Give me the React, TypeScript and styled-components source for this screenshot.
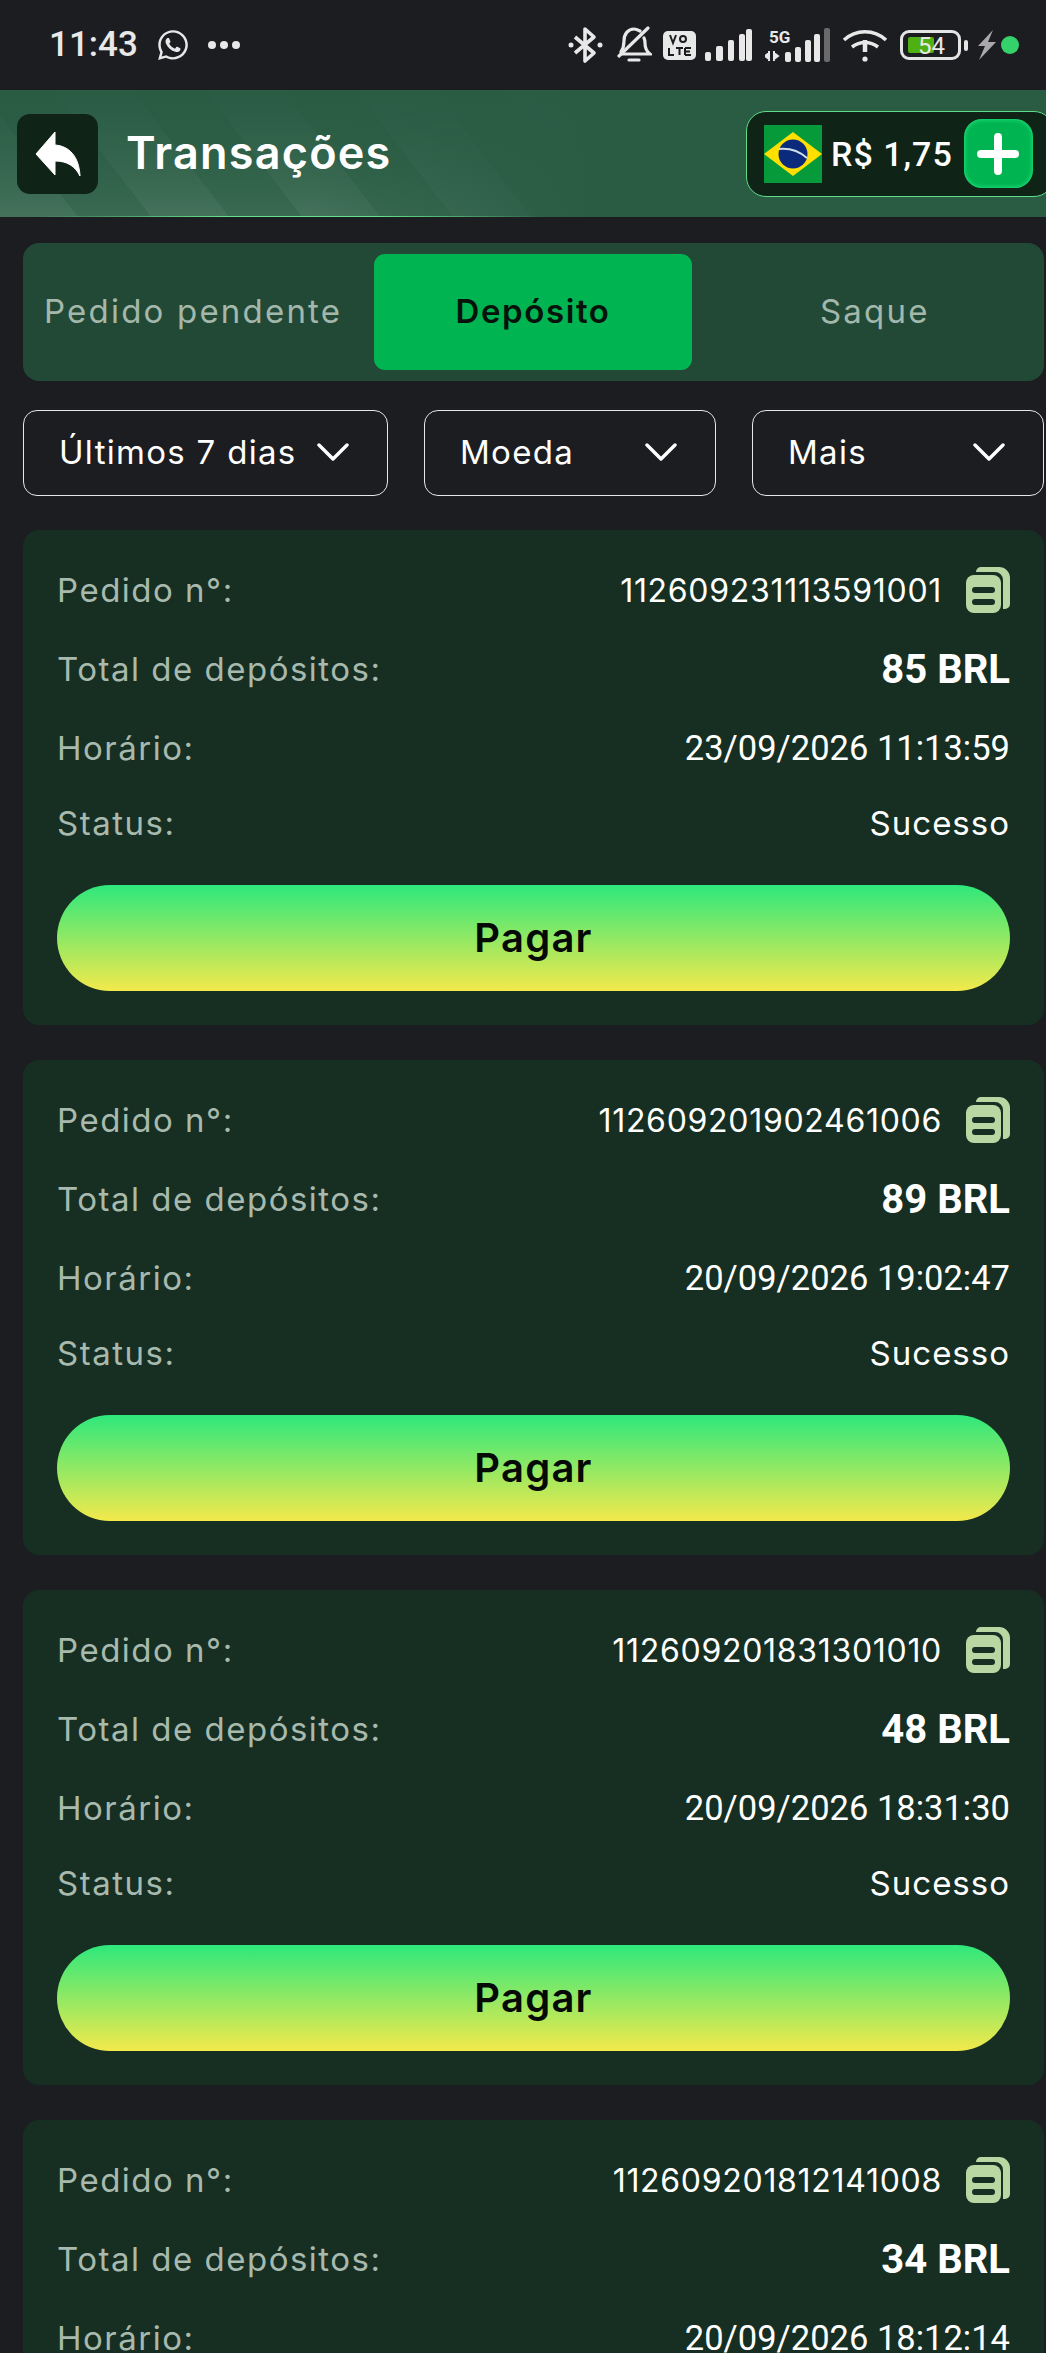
import { FC } from "react"
import styled, { createGlobalStyle } from "styled-components"
import { FaWhatsapp } from "react-icons/fa"

const GlobalStyle = createGlobalStyle`
  html, body {
    margin: 0;
    height: 100%;
    overflow: hidden;
    background: #1c1d21;
  }
`

const Page = styled.div`
  width: 1046px;
  height: 2353px;
  overflow: hidden;
  background: #1c1d21;
  color: #fff;
  font-family: Inter, "Noto Sans", sans-serif;
`

const StatusBar = styled.div`
  height: 90px;
  display: flex;
  align-items: center;
  padding-left: 49px;
  color: #e8e8e8;
`

const Clock = styled.span`
  font-family: Roboto, sans-serif;
  font-weight: 500;
  font-size: 35px;
  line-height: 90px;
`

const Whatsapp = styled(FaWhatsapp)`
  width: 34px;
  height: 34px;
  margin-left: 18px;
`

const Dots = styled.div`
  display: flex;
  gap: 4px;
  margin-left: 18px;
`

const Dot = styled.i`
  width: 8px;
  height: 8px;
  border-radius: 50%;
  background: #e8e8e8;
`

const StatusIcons = styled.div`
  margin-left: auto;
  display: flex;
  align-items: center;
  padding-right: 27px;
`

const StatusIcon = styled.svg<{ $gap?: number }>`
  display: block;
  flex: none;
  margin-left: ${(p) => p.$gap ?? 0}px;
`

const Battery = styled.div`
  width: 61px;
  height: 30px;
  box-sizing: border-box;
  margin-left: 12px;
  border: 3px solid #e4e4e4;
  border-radius: 9px;
  padding: 4px 5px;
  position: relative;
`

const BatteryFill = styled.div`
  width: 26px;
  height: 100%;
  background: #4fb013;
  border-radius: 2px;
`

const BatteryLabel = styled.span`
  position: absolute;
  left: 15px;
  top: -1px;
  font-family: Roboto, sans-serif;
  font-size: 24px;
  line-height: 28px;
  color: #e8e8e8;
`

const BatteryCap = styled.i`
  width: 4px;
  height: 11px;
  margin-left: 3px;
  background: #e4e4e4;
  border-radius: 2px;
`

const ChargeDot = styled.i`
  width: 18px;
  height: 18px;
  margin-left: 5px;
  border-radius: 50%;
  background: #34d26a;
`

const Header = styled.header`
  height: 127px;
  box-sizing: border-box;
  display: flex;
  align-items: center;
  padding-left: 17px;
  background:
    linear-gradient(90deg, transparent 3%, #62e58a 22%, #62e58a 36%, transparent 52%) bottom / 100% 1px no-repeat,
    linear-gradient(90deg, rgba(42, 92, 68, 0) 0%, rgba(42, 92, 68, 0) 30%, #2a5c44 56%),
    linear-gradient(180deg, #2a5c44 0%, rgba(42, 92, 68, 0) 100%),
    repeating-linear-gradient(52.6deg, rgba(255, 255, 255, 0.05) 0 62px, rgba(255, 255, 255, 0) 62px 120px),
    linear-gradient(0deg, #3a6a51 0%, #2a5c44 100%);
`

const BackButton = styled.button`
  width: 81px;
  height: 80px;
  flex: none;
  padding: 0;
  border: 0;
  border-radius: 13px;
  background: #0f2317;
  display: flex;
  align-items: center;
  justify-content: center;
`

const Title = styled.h1`
  margin: 0 0 3px 28px;
  font-weight: 600;
  font-size: 45px;
  letter-spacing: 1.2px;
  color: #fff;
`

const Balance = styled.div`
  margin-left: auto;
  margin-right: -8px;
  width: 308px;
  height: 86px;
  box-sizing: border-box;
  display: flex;
  align-items: center;
  padding-left: 17px;
  border: 1px solid #5fdc87;
  border-radius: 20px;
  background: #0f2317;
`

const Flag = styled.svg`
  display: block;
  flex: none;
`

const BalanceValue = styled.span`
  margin-left: 9px;
  font-family: Roboto, sans-serif;
  font-weight: 500;
  font-size: 34px;
  letter-spacing: 1px;
  white-space: nowrap;
`

const AddButton = styled.button`
  width: 69px;
  height: 69px;
  flex: none;
  margin-left: 11px;
  padding: 0;
  border: 0;
  border-radius: 18px;
  background: #00b451;
  box-shadow: inset 0 0 5px #2af08a;
  display: flex;
  align-items: center;
  justify-content: center;
`

const Content = styled.main`
  padding: 26px 2px 0 23px;
`

const Tabs = styled.div`
  height: 138px;
  box-sizing: border-box;
  display: grid;
  grid-template-columns: 351px 318px 1fr;
  padding: 11px 0;
  border-radius: 16px;
  background: #224936;
`

const Tab = styled.div<{ $active?: boolean; $inset?: number }>`
  display: flex;
  align-items: center;
  justify-content: ${(p) => (p.$inset === undefined ? "center" : "flex-start")};
  padding: 0 0 2px ${(p) => p.$inset ?? 0}px;
  border-radius: 11px;
  font-size: 33px;
  font-weight: ${(p) => (p.$active ? 600 : 400)};
  color: ${(p) => (p.$active ? "#06130b" : "#a3b8ab")};
  background: ${(p) => (p.$active ? "#00b451" : "transparent")};
  letter-spacing: ${(p) => (p.$active ? 1.6 : 2.2)}px;
  white-space: nowrap;
`

const Filters = styled.div`
  display: grid;
  grid-template-columns: 365px 292px 292px;
  gap: 36px;
  margin-top: 29px;
`

const Filter = styled.div`
  height: 86px;
  box-sizing: border-box;
  display: flex;
  align-items: center;
  justify-content: space-between;
  padding: 0 38px 2px 35px;
  border: 1px solid #e6e6e6;
  border-radius: 14px;
  font-size: 33px;
  letter-spacing: 1.3px;
  white-space: nowrap;
`

const Chevron = styled.svg`
  display: block;
  flex: none;
`

const OrderList = styled.div`
  display: flex;
  flex-direction: column;
  gap: 35px;
  margin-top: 34px;
`

const OrderCard = styled.section`
  height: 495px;
  box-sizing: border-box;
  flex: none;
  padding: 37px 34px 35px;
  border-radius: 16px;
  background: #162f22;
  display: flex;
  flex-direction: column;
  gap: 33px;
`

const Row = styled.div<{ $short?: boolean }>`
  height: ${(p) => (p.$short ? 38 : 46)}px;
  flex: none;
  display: flex;
  align-items: center;
  justify-content: space-between;
`

const Label = styled.span`
  font-size: 33px;
  letter-spacing: 1.5px;
  color: #a8b9ae;
  white-space: nowrap;
`

const OrderNumber = styled.div`
  display: flex;
  align-items: center;
  gap: 24px;
  font-size: 32px;
  letter-spacing: 0.7px;
  color: #fff;
`

const Amount = styled.span`
  font-family: Roboto, sans-serif;
  font-weight: 700;
  font-size: 40px;
  color: #fff;
`

const DateText = styled.span`
  font-family: Roboto, sans-serif;
  font-size: 34.5px;
  color: #fff;
`

const StatusText = styled.span`
  font-size: 33px;
  letter-spacing: 1px;
  color: #fff;
`

const PayButton = styled.button`
  height: 106px;
  flex: none;
  margin-top: 10px;
  padding: 0 0 2px;
  border: 0;
  border-radius: 53px;
  background: linear-gradient(180deg, #2ee87c 0%, #f3e94b 100%);
  font-family: Inter, sans-serif;
  font-weight: 600;
  font-size: 40px;
  letter-spacing: 1.2px;
  color: #060a06;
`

const CopyIcon: FC = () => (
  <svg width="44" height="46" viewBox="0 0 44 46" style={{ display: "block", flex: "none" }}>
    <path d="M10 5a5 5 0 0 1 5-5h18a11 11 0 0 1 11 11v26a5 5 0 0 1-5 5h-2V13a8 8 0 0 0-8-8z" fill="#b8d7a3" />
    <rect x="0" y="8" width="35" height="38" rx="8" fill="#b8d7a3" />
    <rect x="6" y="20" width="23" height="6" rx="3" fill="#162f22" />
    <rect x="6" y="32" width="23" height="6" rx="3" fill="#162f22" />
  </svg>
)

const ChevronDown: FC = () => (
  <Chevron width="32" height="20" viewBox="0 0 32 20">
    <path d="M2 3l14 14L30 3" fill="none" stroke="#fff" strokeWidth="3.4" strokeLinecap="round" strokeLinejoin="round" />
  </Chevron>
)

const BrazilFlag: FC = () => (
  <Flag width="58" height="58" viewBox="0 0 58 58">
    <rect width="58" height="58" fill="#079a3a" />
    <path d="M29 7l29 22-29 22L0 29z" fill="#fedf00" />
    <circle cx="29" cy="29" r="14.5" fill="#0b2a7c" />
    <path d="M15 24c10-1 20 2 28 9" fill="none" stroke="#cfe0ea" strokeWidth="2" />
  </Flag>
)

const SignalBars: FC<{ gap: number }> = ({ gap }) => (
  <StatusIcon $gap={gap} width="47" height="32" viewBox="0 0 47 32" fill="#e8e8e8">
    <rect x="0" y="23" width="6" height="9" rx="2" />
    <rect x="11" y="17" width="7" height="15" rx="2" />
    <rect x="23" y="11" width="6" height="21" rx="2" />
    <rect x="34" y="5" width="6" height="27" rx="2" />
    <rect x="41" y="0" width="6" height="32" rx="2" />
  </StatusIcon>
)

interface Order {
  id: string
  amount: string
  time: string
}

const orders: Order[] = [
  { id: "112609231113591001", amount: "85 BRL", time: "23/09/2026 11:13:59" },
  { id: "112609201902461006", amount: "89 BRL", time: "20/09/2026 19:02:47" },
  { id: "112609201831301010", amount: "48 BRL", time: "20/09/2026 18:31:30" },
  { id: "112609201812141008", amount: "34 BRL", time: "20/09/2026 18:12:14" },
]

const App: FC = () => (
  <Page>
    <GlobalStyle />
    <StatusBar>
      <Clock>11:43</Clock>
      <Whatsapp />
      <Dots>
        <Dot />
        <Dot />
        <Dot />
      </Dots>
      <StatusIcons>
        <StatusIcon width="36" height="38" viewBox="0 0 36 38" fill="none" stroke="#e8e8e8" strokeWidth="3.6" strokeLinejoin="round">
          <path d="M7 11l19 16-9 8V3l9 8L7 27" />
          <circle cx="3" cy="19" r="2.5" fill="#e8e8e8" stroke="none" />
          <circle cx="32" cy="19" r="2.5" fill="#e8e8e8" stroke="none" />
        </StatusIcon>
        <StatusIcon $gap={12} width="36" height="38" viewBox="0 0 36 38" fill="none" stroke="#e8e8e8" strokeWidth="3.2" strokeLinecap="round">
          <path d="M6 28h28c-4-3-5-6-5-11 0-2 0-3-1-5M24 5c-2-1-4-2-6-2-6 0-10 5-10 12 0 4-1 8-3 11" />
          <path d="M13 34h10" />
          <path d="M3 30L32 2" />
        </StatusIcon>
        <StatusIcon $gap={11} width="33" height="29" viewBox="0 0 33 29">
          <rect width="33" height="29" rx="5" fill="#e8e8e8" />
          <path d="M7 4l3 8 3-8M17 8a3 3 0 1 0 6 0 3 3 0 1 0-6 0M6 17v7h5M13 17h7M16.500 17v7M22 17h6M22 20.500h5M22 24h6M22 17v7" fill="none" stroke="#1c1d21" strokeWidth="2" />
        </StatusIcon>
        <SignalBars gap={9} />
        <StatusIcon $gap={13} width="65" height="34" viewBox="0 0 65 34" fill="#e8e8e8">
          <rect x="20" y="24" width="6" height="10" rx="2" />
          <rect x="30" y="19" width="6" height="15" rx="2" />
          <rect x="40" y="12" width="6" height="22" rx="2" />
          <rect x="49" y="6" width="6" height="28" rx="2" />
          <rect x="59" y="0" width="6" height="34" rx="2" fill="#6a6a6c" />
          <path d="M4 23v10M9 23v10M0 28l4-3v6zM13 28l-4-3v6z" stroke="#e8e8e8" strokeWidth="2" />
          <text x="4" y="15" fontFamily="Roboto, sans-serif" fontWeight="700" fontSize="17">5G</text>
        </StatusIcon>
        <StatusIcon $gap={12} width="46" height="34" viewBox="0 0 46 34" fill="none" stroke="#e8e8e8" strokeWidth="3.6">
          <path d="M2 12c12-11 30-11 42 0M10 19c8-6 18-6 26 0" />
          <path d="M23 12v12" strokeWidth="4.500" />
          <circle cx="23" cy="31" r="2.600" fill="#e8e8e8" stroke="none" />
        </StatusIcon>
        <Battery>
          <BatteryFill />
          <BatteryLabel>54</BatteryLabel>
        </Battery>
        <BatteryCap />
        <StatusIcon $gap={8} width="20" height="30" viewBox="0 0 20 30" fill="#a9a9ab">
          <path d="M17 0L2 16h7L3 30l17-18h-8z" />
        </StatusIcon>
        <ChargeDot />
      </StatusIcons>
    </StatusBar>

    <Header>
      <BackButton>
        <svg width="46" height="46" viewBox="0 0 46 46">
          <path d="M20 1v13c14 1 24 11 25 31-5-10-13-15-25-15v14L1 23z" fill="#fff" strokeLinejoin="round" stroke="#fff" strokeWidth="1" />
        </svg>
      </BackButton>
      <Title>Transações</Title>
      <Balance>
        <BrazilFlag />
        <BalanceValue>R$ 1,75</BalanceValue>
        <AddButton>
          <svg width="42" height="42" viewBox="0 0 42 42">
            <path d="M21 4v34M4 21h34" stroke="#fff" strokeWidth="8" strokeLinecap="round" />
          </svg>
        </AddButton>
      </Balance>
    </Header>

    <Content>
      <Tabs>
        <Tab $inset={21}>Pedido pendente</Tab>
        <Tab $active>Depósito</Tab>
        <Tab $inset={128}>Saque</Tab>
      </Tabs>

      <Filters>
        <Filter>
          Últimos 7 dias
          <ChevronDown />
        </Filter>
        <Filter>
          Moeda
          <ChevronDown />
        </Filter>
        <Filter>
          Mais
          <ChevronDown />
        </Filter>
      </Filters>

      <OrderList>
        {orders.map((order) => (
          <OrderCard key={order.id}>
            <Row>
              <Label>Pedido n°:</Label>
              <OrderNumber>
                {order.id}
                <CopyIcon />
              </OrderNumber>
            </Row>
            <Row>
              <Label>Total de depósitos:</Label>
              <Amount>{order.amount}</Amount>
            </Row>
            <Row>
              <Label>Horário:</Label>
              <DateText>{order.time}</DateText>
            </Row>
            <Row $short>
              <Label>Status:</Label>
              <StatusText>Sucesso</StatusText>
            </Row>
            <PayButton>Pagar</PayButton>
          </OrderCard>
        ))}
      </OrderList>
    </Content>
  </Page>
)

export default App
